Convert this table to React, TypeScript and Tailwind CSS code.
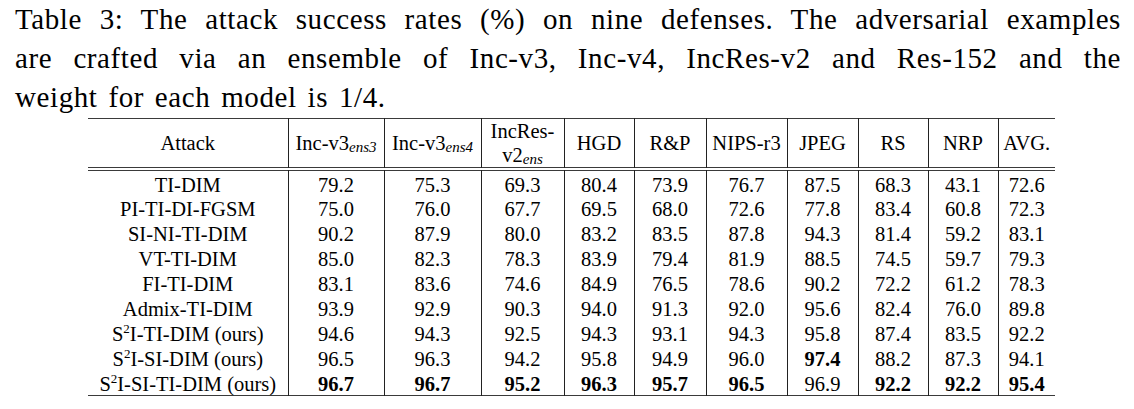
import type { ReactNode } from 'react'

type Row = {
  attack: ReactNode
  values: string[]
  bold: boolean[]
}

const plain = (n: number) => Array(n).fill(false)

const s2i = (rest: string) => (
  <>
    S<sup className="relative -top-[2px] align-top text-[13px] leading-none">2</sup>I{rest}
  </>
)

const rows: Row[] = [
  { attack: 'TI-DIM', values: ['79.2', '75.3', '69.3', '80.4', '73.9', '76.7', '87.5', '68.3', '43.1', '72.6'], bold: plain(10) },
  { attack: 'PI-TI-DI-FGSM', values: ['75.0', '76.0', '67.7', '69.5', '68.0', '72.6', '77.8', '83.4', '60.8', '72.3'], bold: plain(10) },
  { attack: 'SI-NI-TI-DIM', values: ['90.2', '87.9', '80.0', '83.2', '83.5', '87.8', '94.3', '81.4', '59.2', '83.1'], bold: plain(10) },
  { attack: 'VT-TI-DIM', values: ['85.0', '82.3', '78.3', '83.9', '79.4', '81.9', '88.5', '74.5', '59.7', '79.3'], bold: plain(10) },
  { attack: 'FI-TI-DIM', values: ['83.1', '83.6', '74.6', '84.9', '76.5', '78.6', '90.2', '72.2', '61.2', '78.3'], bold: plain(10) },
  { attack: 'Admix-TI-DIM', values: ['93.9', '92.9', '90.3', '94.0', '91.3', '92.0', '95.6', '82.4', '76.0', '89.8'], bold: plain(10) },
  { attack: s2i('-TI-DIM (ours)'), values: ['94.6', '94.3', '92.5', '94.3', '93.1', '94.3', '95.8', '87.4', '83.5', '92.2'], bold: plain(10) },
  {
    attack: s2i('-SI-DIM (ours)'),
    values: ['96.5', '96.3', '94.2', '95.8', '94.9', '96.0', '97.4', '88.2', '87.3', '94.1'],
    bold: [false, false, false, false, false, false, true, false, false, false]
  },
  {
    attack: s2i('-SI-TI-DIM (ours)'),
    values: ['96.7', '96.7', '95.2', '96.3', '95.7', '96.5', '96.9', '92.2', '92.2', '95.4'],
    bold: [true, true, true, true, true, true, false, true, true, true]
  }
]

const widths = [200, 96, 97, 83, 70, 72, 81, 71, 70, 70, 57]

const Sub = ({ children }: { children: ReactNode }) => (
  <sub className="relative top-[2px] align-baseline text-[15px] italic leading-none">{children}</sub>
)

const headers: ReactNode[] = [
  'Attack',
  <>Inc-v3<Sub>ens3</Sub></>,
  <>Inc-v3<Sub>ens4</Sub></>,
  <span className="block leading-[24px]">
    IncRes-
    <br />
    v2<Sub>ens</Sub>
  </span>,
  'HGD',
  'R&P',
  'NIPS-r3',
  'JPEG',
  'RS',
  'NRP',
  'AVG.'
]

export default function App() {
  return (
    <div className="h-[409px] w-[1134px] bg-white font-['Liberation_Serif',serif] text-black">
      <div className="pl-[15px] pr-[13px] text-[29px] leading-[39px] tracking-[0.6px] [word-spacing:3px]">
        <p className="text-justify [text-align-last:justify]">
          Table 3: The attack success rates (%) on nine defenses. The adversarial examples
        </p>
        <p className="text-justify [text-align-last:justify]">
          are crafted via an ensemble of Inc-v3, Inc-v4, IncRes-v2 and Res-152 and the
        </p>
        <p>weight for each model is 1/4.</p>
      </div>

      <table className="ml-[88px] mt-[1px] w-[967px] table-fixed border-collapse border-y-[1.5px] border-[#3a3a3a] text-center text-[20.5px]">
        <colgroup>
          {widths.map((w, i) => (
            <col key={i} style={{ width: w }} />
          ))}
        </colgroup>
        <thead>
          <tr className="h-[48px] border-b border-[#3a3a3a]">
            {headers.map((h, i) => (
              <th
                key={i}
                className={`whitespace-nowrap p-0 font-normal leading-none ${i > 0 ? 'border-l border-[#222]' : ''}`}
              >
                {h}
              </th>
            ))}
          </tr>
          <tr className="h-[3px] border-b border-[#3a3a3a]">
            <th colSpan={11} className="p-0" />
          </tr>
        </thead>
        <tbody>
          {rows.map((r, ri) => (
            <tr key={ri} className="h-[25px]">
              <td className="whitespace-nowrap p-0 pt-[3px] leading-none">{r.attack}</td>
              {r.values.map((v, i) => (
                <td
                  key={i}
                  className={`border-l border-[#222] p-0 pt-[3px] leading-none ${r.bold[i] ? 'font-bold' : ''}`}
                >
                  {v}
                </td>
              ))}
            </tr>
          ))}
        </tbody>
      </table>
    </div>
  )
}
